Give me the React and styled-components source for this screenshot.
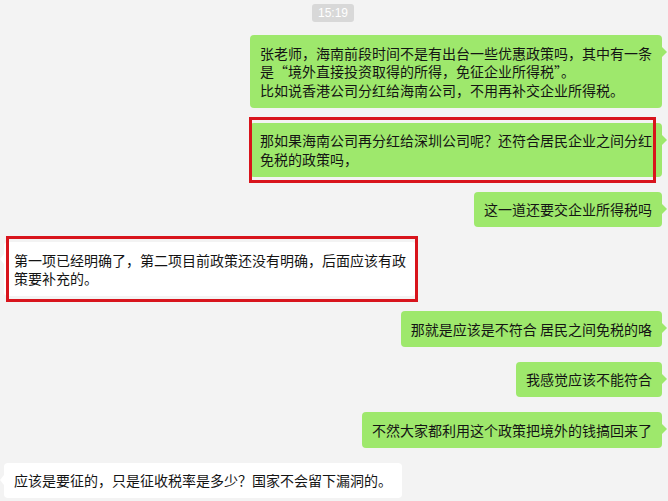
import React from "react";
import styled, { createGlobalStyle, css } from "styled-components";

const Global = createGlobalStyle`
  html, body { margin: 0; padding: 0; background: #f3f3f3; }
  body {
    font-family: "Noto Sans CJK SC", "Noto Sans", sans-serif;
    -webkit-font-smoothing: antialiased;
  }
`;

const Chat = styled.div`
  width: 668px;
  height: 501px;
  box-sizing: border-box;
  padding: 4px 6px 0 4px;
  display: flex;
  flex-direction: column;
  gap: 15px;
  overflow: hidden;
  background: #f3f3f3;
`;

const Time = styled.div`
  align-self: center;
  margin: 0 0 -2px 0;
  height: 18px;
  line-height: 18px;
  padding: 0 6px;
  border-radius: 3px;
  background: #d8d8d8;
  color: #ffffff;
  font-family: "Liberation Sans", "Noto Sans", sans-serif;
  font-size: 12px;
`;

const Bubble = styled.div`
  position: relative;
  box-sizing: border-box;
  max-width: 414px;
  padding: 8.5px 10px;
  border-radius: 4px;
  font-size: 14px;
  line-height: 18.5px;
  color: #141414;
  white-space: nowrap;
  ${(p) =>
    p.$mine
      ? css`
          align-self: flex-end;
          background: #9ee86c;
          &::after {
            content: "";
            position: absolute;
            right: -5px;
            top: 12px;
            border-style: solid;
            border-width: 5px 0 5px 5px;
            border-color: transparent transparent transparent #9ee86c;
          }
        `
      : css`
          align-self: flex-start;
          background: #ffffff;
          &::after {
            content: "";
            position: absolute;
            left: -4px;
            top: 12px;
            border-style: solid;
            border-width: 5px 4px 5px 0;
            border-color: transparent #ffffff transparent transparent;
          }
        `}
`;

const Mark = styled.div`
  position: absolute;
  top: -6px;
  bottom: -6px;
  left: ${(p) => p.$left}px;
  right: ${(p) => p.$right}px;
  border: 3px solid #d8141c;
  pointer-events: none;
`;

export default function App() {
  return (
    <>
      <Global />
      <Chat lang="zh-CN">
        <Time>15:19</Time>
        <Bubble $mine>
          张老师，海南前段时间不是有出台一些优惠政策吗，其中有一条
          <br />
          是“境外直接投资取得的所得，免征企业所得税”。
          <br />
          比如说香港公司分红给海南公司，不用再补交企业所得税。
        </Bubble>
        <Bubble $mine>
          那如果海南公司再分红给深圳公司呢？还符合居民企业之间分红
          <br />
          免税的政策吗，
          <Mark $left={-1} $right={6} />
        </Bubble>
        <Bubble $mine>这一道还要交企业所得税吗</Bubble>
        <Bubble>
          第一项已经明确了，第二项目前政策还没有明确，后面应该有政
          <br />
          策要补充的。
          <Mark $left={2} $right={-2} />
        </Bubble>
        <Bubble $mine>那就是应该是不符合 居民之间免税的咯</Bubble>
        <Bubble $mine>我感觉应该不能符合</Bubble>
        <Bubble $mine>不然大家都利用这个政策把境外的钱搞回来了</Bubble>
        <Bubble>应该是要征的，只是征收税率是多少？国家不会留下漏洞的。</Bubble>
      </Chat>
    </>
  );
}
